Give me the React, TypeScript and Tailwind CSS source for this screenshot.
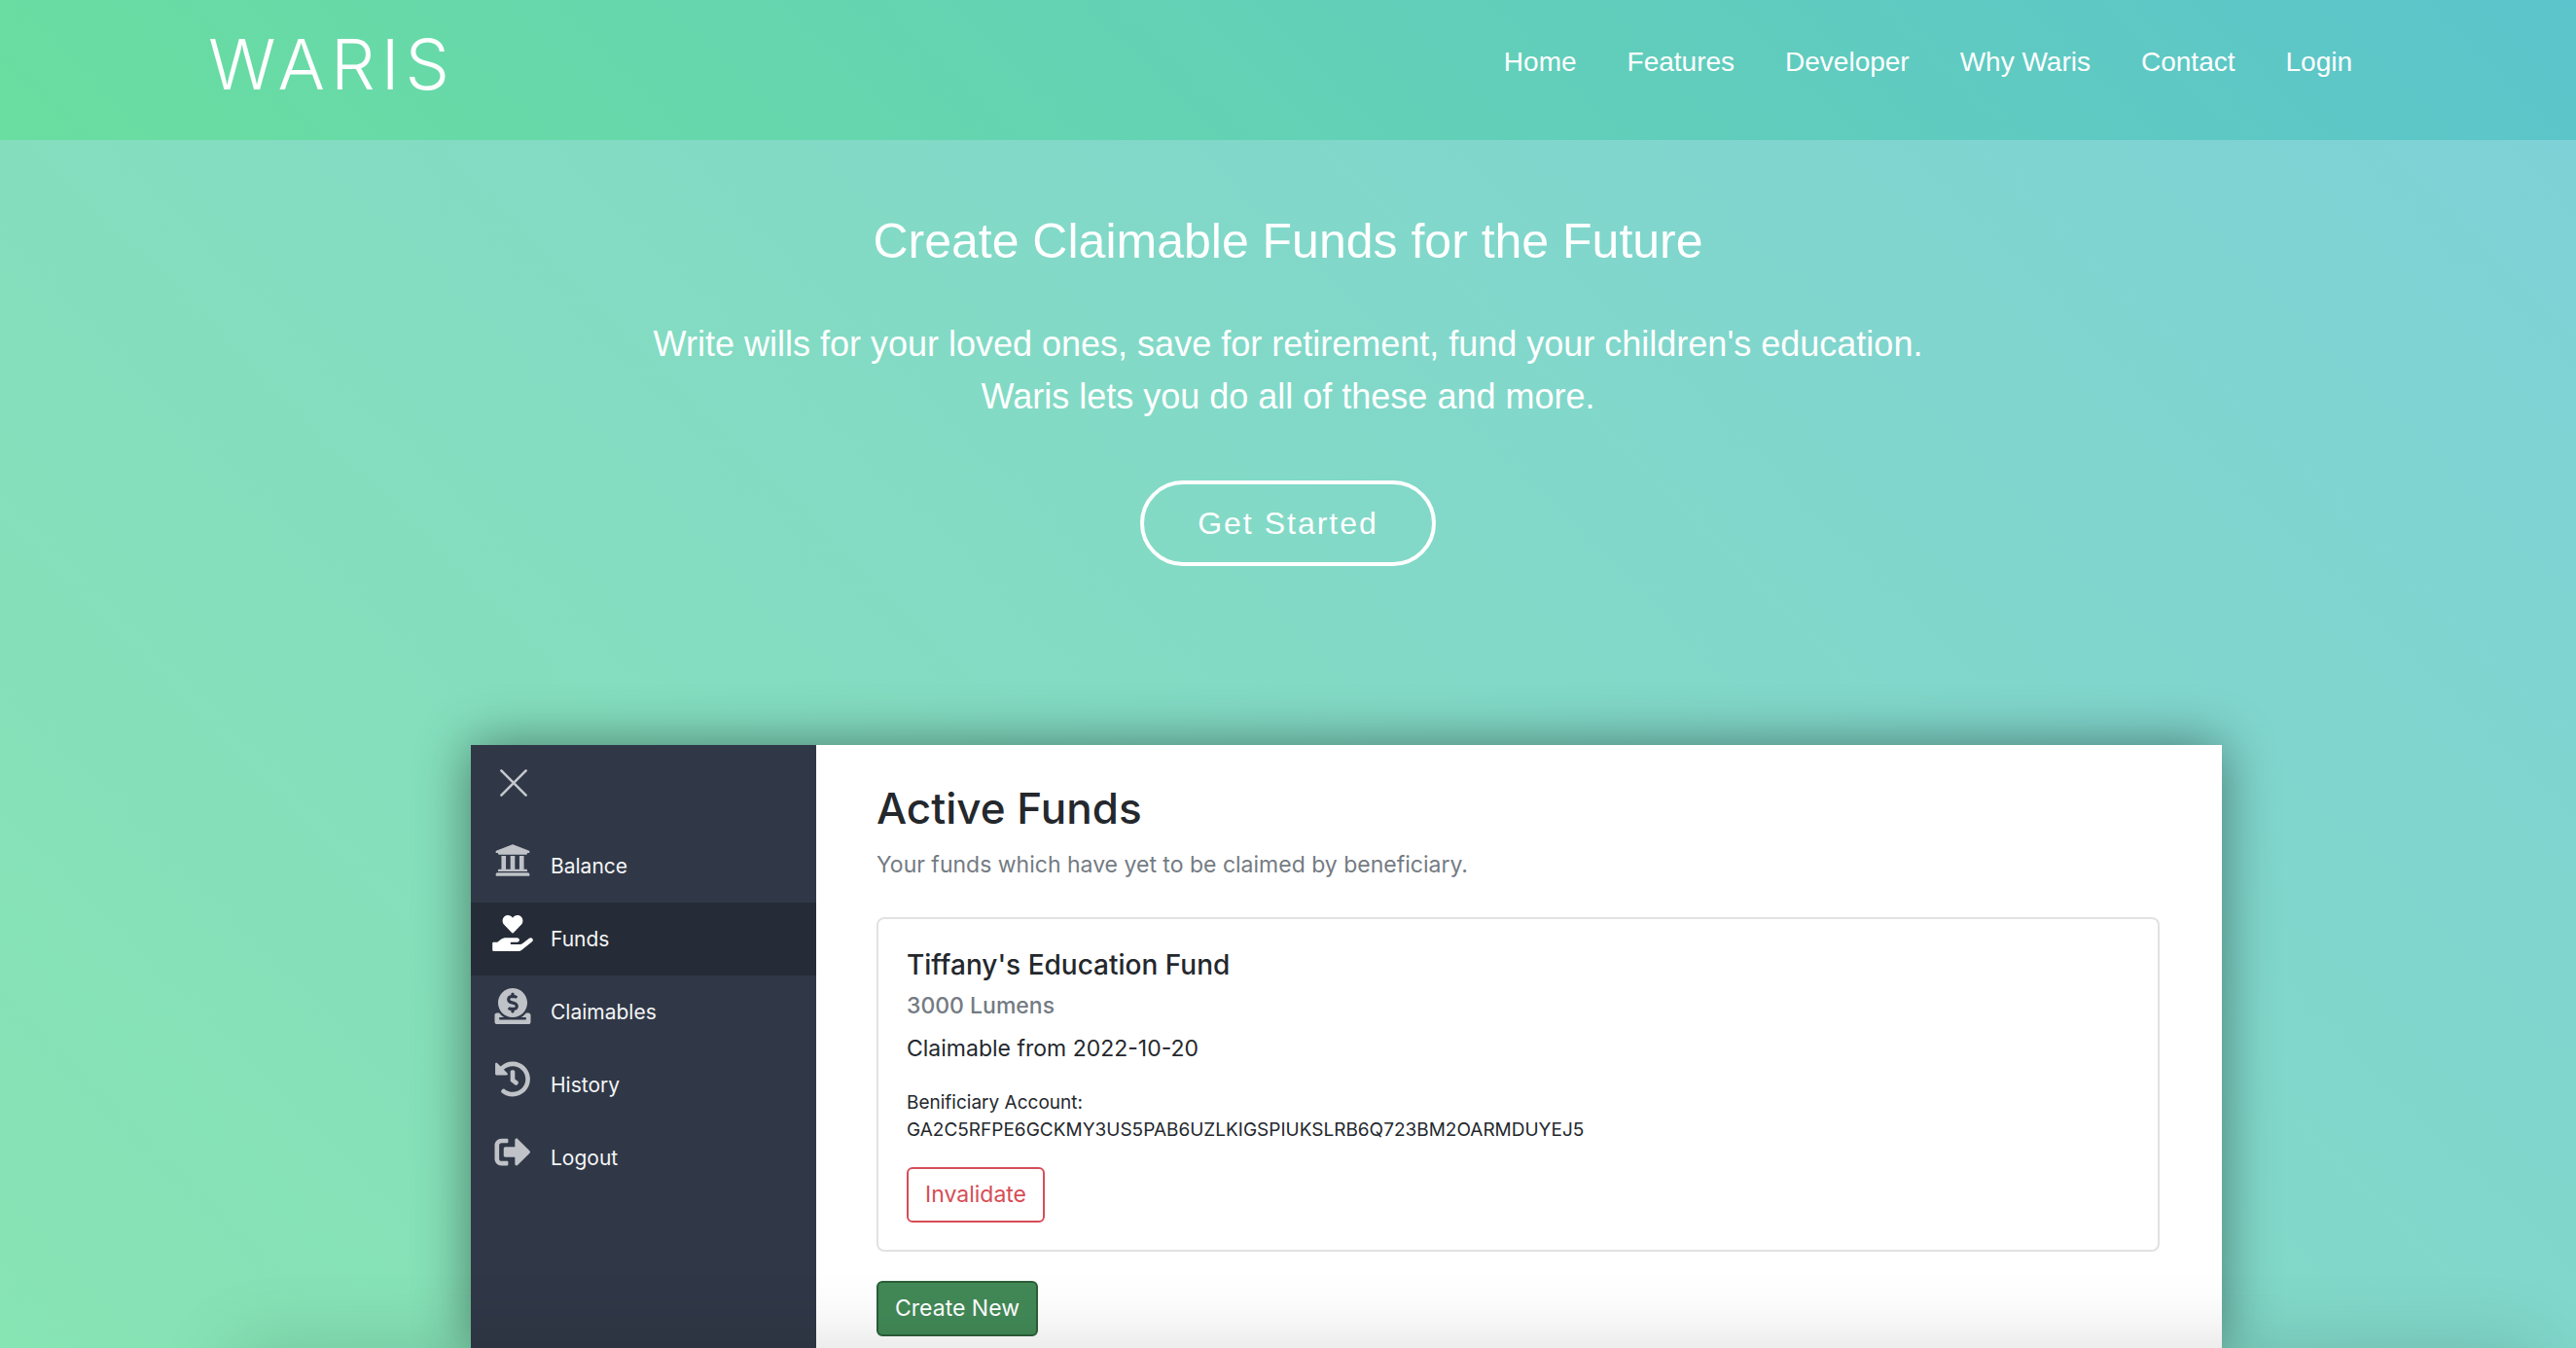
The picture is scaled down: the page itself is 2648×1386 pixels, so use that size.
import React from "react";
import { FaUniversity, FaHandHoldingHeart, FaDonate, FaHistory, FaSignOutAlt } from "react-icons/fa";

const navLinks = ["Home", "Features", "Developer", "Why Waris", "Contact", "Login"];

const menu = [
  { label: "Balance", Icon: FaUniversity },
  { label: "Funds", Icon: FaHandHoldingHeart, active: true },
  { label: "Claimables", Icon: FaDonate },
  { label: "History", Icon: FaHistory },
  { label: "Logout", Icon: FaSignOutAlt },
];

function Header() {
  return (
    <header className="bg-[linear-gradient(45deg,#6adea0,#5bc4cc)]">
      <div className="mx-auto flex h-36 w-full max-w-[2280px] items-start justify-between px-[30px] text-white">
        <a href="#" className="font-['Inter'] text-[72px] leading-[132px] font-light tracking-[6px]">WARIS</a>
        <nav className="flex gap-[52px] pr-4 text-[28px] leading-[128px]">
          {navLinks.map((l) => (
            <a key={l} href="#">{l}</a>
          ))}
        </nav>
      </div>
    </header>
  );
}

function Sidebar() {
  return (
    <aside className="w-[355px] shrink-0 bg-[#303847] text-[#f4f5f6]">
      <button aria-label="Close menu" className="mt-[25px] mb-[34px] ml-[30px] block text-[#c4c7cc]">
        <svg width="28" height="28" viewBox="0 0 28 28" fill="none" stroke="currentColor" strokeWidth="2.6" strokeLinecap="round">
          <path d="M1.4 1.4 26.6 26.6M26.6 1.4 1.4 26.6" />
        </svg>
      </button>
      <ul>
        {menu.map(({ label, Icon, active }) => (
          <li key={label}>
            <a href="#" className={`flex h-[75px] items-center gap-[18px] pl-[22px] ${active ? "bg-[#262c37]" : ""}`}>
              <span className={`pb-3 ${active ? "text-white" : "text-[#bfc2c7]"}`}>
                <Icon className="h-[37px] w-[42px]" />
              </span>
              <span className="text-[21px]">{label}</span>
            </a>
          </li>
        ))}
      </ul>
    </aside>
  );
}

function FundCard() {
  return (
    <article className="mt-9 rounded-lg border-2 border-[#e2e2e3] px-[29px] pt-[29px] pb-7">
      <h3 className="text-[28px] leading-9 font-medium">Tiffany's Education Fund</h3>
      <p className="mt-[10px] text-[23px] leading-7 font-medium text-[#747b83]">3000 Lumens</p>
      <p className="mt-3 text-[23px] leading-9">Claimable from 2022-10-20</p>
      <p className="mt-6 text-[19px] leading-7">
        Benificiary Account:
        <br />
        GA2C5RFPE6GCKMY3US5PAB6UZLKIGSPIUKSLRB6Q723BM2OARMDUYEJ5
      </p>
      <button className="mt-6 h-[57px] rounded-md border-2 border-[#d64d56] px-[17px] text-[23px] text-[#d64d56]">Invalidate</button>
    </article>
  );
}

function Dashboard() {
  return (
    <div className="mx-auto mt-[184px] flex w-full max-w-[1800px] flex-1 bg-white font-['Inter'] text-[#24282d] shadow-[0_0_52px_rgba(0,0,0,0.45)]">
      <Sidebar />
      <div className="flex-1 pt-[37px] pr-16 pb-[10px] pl-[62px]">
        <h2 className="text-[44px] leading-[56px] font-medium">Active Funds</h2>
        <p className="mt-3 text-[23px] leading-9 text-[#747b83]">Your funds which have yet to be claimed by beneficiary.</p>
        <FundCard />
        <button className="mt-[30px] h-[57px] rounded-md border-2 border-[#2c5f39] bg-[#428957] px-[17px] text-[23px] text-white">Create New</button>
      </div>
    </div>
  );
}

export default function App() {
  return (
    <div className="flex min-h-screen flex-col bg-white font-['Liberation_Sans',sans-serif]">
      <Header />
      <main className="relative flex flex-1 flex-col overflow-hidden bg-[linear-gradient(45deg,#87e4b3,#7ed1d6)] pt-[74px]">
        <div className="flex flex-col items-center px-8 text-center text-white">
          <h1 className="text-[50px] leading-[60px]">Create Claimable Funds for the Future</h1>
          <p className="mt-[49px] text-[36px] leading-[54px]">
            Write wills for your loved ones, save for retirement, fund your children's education.
            <br />
            Waris lets you do all of these and more.
          </p>
          <button className="mt-[59px] h-[88px] rounded-full border-4 border-white px-[55px] text-[32px] tracking-[2px]">Get Started</button>
        </div>
        <div className="flex flex-1 flex-col pl-[120px]">
          <Dashboard />
        </div>
        <div className="pointer-events-none absolute top-full right-10 left-60 h-60 shadow-[0_0_80px_rgba(0,0,0,0.15)]" />
      </main>
    </div>
  );
}
